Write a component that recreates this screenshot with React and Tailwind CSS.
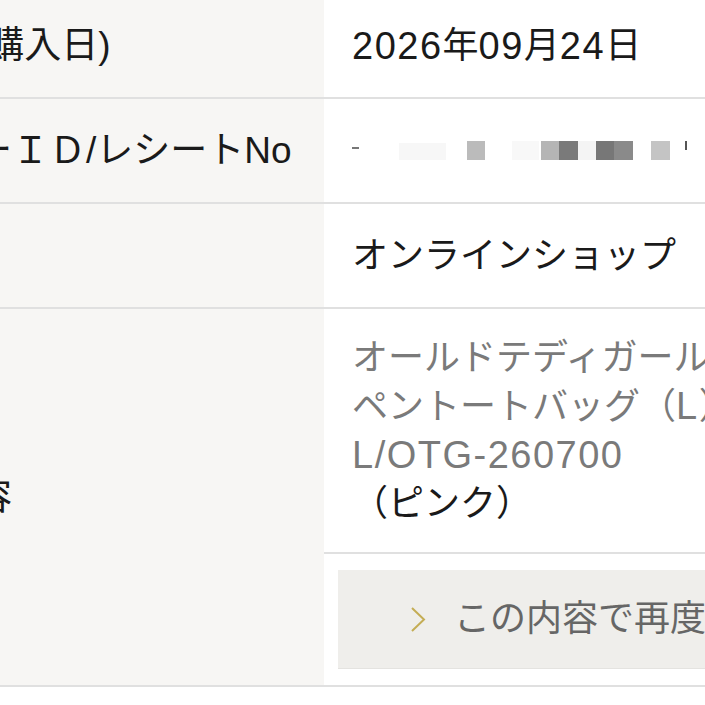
const font = {
  fontFamily: '"Liberation Sans", "Noto Sans CJK JP", sans-serif',
};

// latin runs in the original font are a bit wider than the CJK around them
const L = ({ children }) => (
  <span className="text-[38px] tracking-[1.5px]">{children}</span>
);

const Mosaic = () => (
  <div className="flex items-start h-[20px]">
    <div className="w-[7px] h-[2px] mt-[6px] bg-[#777]" />
    <div className="ml-[40px] w-[47px] h-[17px] mt-[2px] bg-[#f7f7f7]" />
    <div className="ml-[21px] w-[18px] h-[19px] bg-[#bbbbbb]" />
    <div className="ml-[27px] w-[27px] h-[19px] bg-[#f8f8f8]" />
    <div className="ml-[2px] w-[18px] h-[19px] bg-[#b5b5b5]" />
    <div className="w-[19px] h-[19px] bg-[#7a7a7a]" />
    <div className="w-[18px] h-[19px] bg-[#f4f4f4]" />
    <div className="w-[18px] h-[19px] bg-[#777777]" />
    <div className="w-[19px] h-[19px] bg-[#8a8a8a]" />
    <div className="ml-[18px] w-[19px] h-[19px] bg-[#c4c4c4]" />
    <div className="ml-[15px] w-[2px] h-[9px] bg-[#555]" />
  </div>
);

const App = () => {
  const rows = [
    {
      label: "注文日(購入日)",
      value: (
        <>
          <L>2026</L>年<L>09</L>月<L>24</L>日
        </>
      ),
    },
    { label: "オーダーＩＤ/レシートNo", value: <Mosaic /> },
    { label: "店舗", value: "オンラインショップ" },
  ];

  return (
    <div
      className="w-[705px] h-[705px] overflow-hidden bg-white text-[#1a1a1a]"
      style={font}
    >
      <div className="-mt-[6px] -ml-[136px] w-[1100px] grid grid-cols-[460px_640px]">
        {rows.map((row, i) => (
          <div key={i} className="contents">
            <div className="h-[105px] bg-[#f7f6f4] border-b-2 border-[#e0e0e0] flex items-center whitespace-nowrap text-[37px] leading-none">
              {row.label}
            </div>
            <div className="h-[105px] border-b-2 border-[#e0e0e0] flex items-center pl-[28px] whitespace-nowrap text-[36px] leading-none">
              {row.value}
            </div>
          </div>
        ))}

        <div className="row-span-2 bg-[#f7f6f4] border-b-2 border-[#e0e0e0] flex items-center whitespace-nowrap text-[37px] leading-none">
          購入内容
        </div>
        <div className="h-[245px] border-b-2 border-[#e0e0e0] flex flex-col justify-center pl-[28px] text-[36px] leading-[48px] whitespace-nowrap">
          <p className="text-[#7a7a7a]">オールドテディガール</p>
          <p className="text-[#7a7a7a]">
            ペントートバッグ（<L>L</L>）
          </p>
          <p className="text-[#7a7a7a]">
            <L>L/OTG-260700</L>
          </p>
          <p className="text-[#1a1a1a]">（ピンク）</p>
        </div>

        <div className="h-[133px] border-b-2 border-[#e0e0e0] pl-[14px] py-[16px]">
          <button className="w-full h-full bg-[#efeeeb] border-b border-[#e4e3e0] flex items-center pl-[72px] gap-[28px] text-[36px] text-[#666] whitespace-nowrap">
            <svg width="16" height="27" viewBox="0 0 16 27" fill="none">
              <path d="M2 2 L14 13.5 L2 25" stroke="#c4ad55" strokeWidth="2" />
            </svg>
            この内容で再度購入する
          </button>
        </div>
      </div>
    </div>
  );
};

export default App;
